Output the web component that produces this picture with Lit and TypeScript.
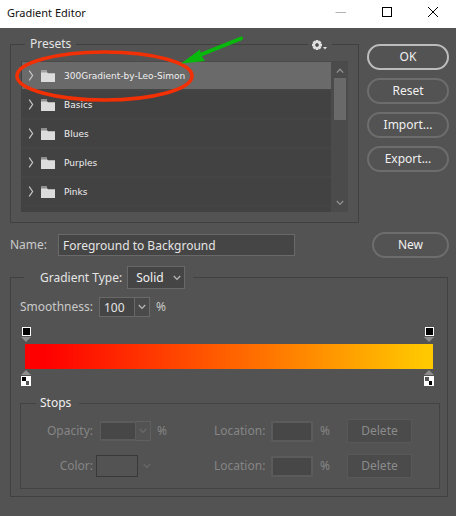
import { LitElement, html, css, svg } from "lit";
import { customElement, state } from "lit/decorators.js";

const chevronDown = html`<svg class="chev" viewBox="0 0 8 6" aria-hidden="true"><path d="M0.8 1 L4 4.4 L7.2 1" /></svg>`;
const chevronUp = html`<svg class="chev" viewBox="0 0 8 6" aria-hidden="true"><path d="M0.8 4.6 L4 1.2 L7.2 4.6" /></svg>`;
const teeth = [0, 45, 90, 135, 180, 225, 270, 315];

@customElement("app-root")
export class AppRoot extends LitElement {
  @state() private selected = 0;

  private presets = ["300Gradient-by-Leo-Simon", "Basics", "Blues", "Purples", "Pinks"];

  static styles = css`
    :host {
      display: flex;
      flex-direction: column;
      position: relative;
      min-height: 100vh;
      background: #535353;
      color: #e4e4e4;
      font: 12px/16px "Noto Sans", "Open Sans", sans-serif;
    }
    * { box-sizing: border-box; }
    button, input, select { font: inherit; color: inherit; margin: 0; border-radius: 0; }
    button { padding: 0; background: none; border: 0; }
    svg { display: block; }
    fieldset { margin: 0; min-width: 0; border: 1px solid #414141; }
    .titlebar {
      display: flex;
      align-items: center;
      height: 28px;
      padding-left: 7px;
      background: #fff;
      color: #111;
    }
    .titlebar h1 { flex: 1; margin: 0; font-size: 11px; font-weight: 400; line-height: 16px; padding-bottom: 2px; }
    .win { width: 46px; height: 28px; display: grid; place-items: center; padding-bottom: 4px; }
    .win svg { width: 12px; height: 12px; fill: none; stroke: #000; }
    .win .dim { stroke: #b4b4b4; }
    main { padding: 8px 7px 16px 10px; }
    .top { display: grid; grid-template-columns: 1fr 82px; column-gap: 8px; }
    .presets { position: relative; height: 187px; padding: 9px 10px 9px; }
    .presets legend { margin-left: 4px; padding: 0 5px; }
    .gear {
      position: absolute;
      top: -14px;
      right: 26px;
      padding: 0 3px;
      background: #535353;
    }
    .gear svg { width: 18px; height: 14px; fill: #e2e2e2; }
    .list { display: grid; grid-template-columns: 1fr 17px; height: 151px; background: #424242; overflow: hidden; border-top: 1px solid #4a4a4a; }
    .list ul { margin: 0; padding: 0 0 0 1px; list-style: none; overflow: hidden; }
    .list li { border-bottom: 2px solid #454545; }
    .row { display: flex; align-items: center; width: 100%; height: 27px; padding-left: 6px; font-family: "DejaVu Sans", sans-serif; font-size: 9px; text-align: left; color: #efefef; }
    .row.on { background: #6a6a6a; }
    .arrow { width: 6px; height: 11px; fill: none; stroke: #c8c8c8; stroke-width: 1.2; margin-right: 7px; }
    .folder { width: 14px; height: 12px; fill: #dcdcdc; margin-right: 9px; }
    .scroll { display: flex; flex-direction: column; align-items: center; padding: 6px 0; background: #4b4b4b; }
    .thumb { width: 12px; height: 42px; margin-top: 4px; margin-bottom: auto; background: #696969; }
    .chev { width: 8px; height: 6px; fill: none; stroke: #b8b8b8; stroke-width: 1.3; }
    .scroll .chev { stroke: #919191; }
    .actions { display: flex; flex-direction: column; gap: 8px; padding-top: 8px; }
    .pill { height: 26px; border: 2px solid #6d6d6d; border-radius: 13px; color: #f0f0f0; }
    .pill.main { border-color: #bcbcbc; }
    .name { display: grid; grid-template-columns: 48px 1fr 77px; align-items: center; margin-top: 9px; height: 26px; color: #c9c9c9; }
    .name input { width: 100%; height: 22px; margin: 0; padding: 0 4px; }
    .name .field { padding-right: 77px; display: flex; }
    input { min-width: 0; background: #454545; border: 1px solid #696969; color: #e4e4e4; }
    .group { margin-top: 8px; padding: 8px 7px 7px 9px; margin-right: 1px; }
    .group > legend { display: flex; align-items: center; gap: 5px; margin-left: 4px; padding: 0 8px 0 16px; }
    .select { position: relative; }
    .select select { appearance: none; display: block; width: 58px; height: 23px; padding: 0 0 0 8px; background: #454545; border: 1px solid #696969; color: #f0f0f0; }
    .select .chev { position: absolute; right: 4px; top: 9px; pointer-events: none; }
    .smooth { display: flex; align-items: center; height: 20px; color: #c9c9c9; }
    .smooth label { width: 79px; }
    .combo { display: grid; grid-template-columns: 36px 15px; height: 20px; width: 51px; margin-right: 6px; }
    .combo input { width: 100%; height: 20px; padding: 0 4px; }
    .combo button { display: grid; place-items: center; border: 1px solid #696969; border-left: 0; background: #4a4a4a; }
    .ramp { padding: 9px 7px 0 5px; }
    .bar { height: 25px; background: linear-gradient(90deg, #ff0000 5%, #ffc800 98%); }
    .marks { display: flex; justify-content: space-between; height: 18px; margin: 0 -2px 0 -4px; }
    .marks svg { width: 11px; height: 18px; }
    .stops { height: 94px; margin-top: 8px; padding: 8px 27px 0 7px; border-color: #434343; }
    .stops legend { margin-left: 8px; padding: 0 8px 0 4px; color: #f0f0f0; }
    .stoprow { display: grid; grid-template-columns: 65px 7px 51px 6px 57px 50px 7px 42px 7px 1fr 65px; align-items: center; height: 23px; color: #858585; }
    .stoprow + .stoprow { margin-top: 12px; }
    .stoprow label { white-space: nowrap; }
    .stoprow .end { text-align: right; }
    .stoprow .combo { margin: 0; }
    .stoprow input { width: 100%; height: 21px; border: 2px solid #5b5b5b; background: #474747; }
    .stoprow .combo input { height: 20px; border-width: 2px 1px; }
    .stoprow .combo button { background: none; border-color: #606060; }
    .stoprow .chev { stroke: #6a6a6a; }
    .well { display: flex; align-items: center; gap: 5px; margin-left: -4px; }
    .swatch { width: 44px; height: 22px; border: 1px solid #383838; }
    .del { height: 24px; background: #4b4b4b; border: 1px solid #585858; color: #8b8b8b; }
    .note { position: absolute; left: 0; top: 28px; width: 260px; height: 90px; pointer-events: none; }
  `;

  private row(name: string, i: number) {
    return html`<li>
      <button class="row ${i === this.selected ? "on" : ""}" @click=${() => (this.selected = i)}>
        <svg class="arrow" viewBox="0 0 6 11" aria-hidden="true"><path d="M1.2 0.6 L4.6 5.5 L1.2 10.4" /></svg>
        <svg class="folder" viewBox="0 0 14 12" aria-hidden="true"><path d="M0 0.5H6V1.5H0ZM0 2.3H6L7 3.3H14V12H0Z" /></svg>
        ${name}
      </button>
    </li>`;
  }

  private opacityMark() {
    return html`<svg viewBox="0 0 11 18" aria-hidden="true">
      <rect x="1.5" y="1.5" width="8" height="8" fill="#000" stroke="#fff" />
      <path d="M0 11H10L5 16Z" fill="#8c8c8c" />
    </svg>`;
  }

  private colorMark(flip: boolean) {
    return html`<svg viewBox="0 0 11 18" aria-hidden="true">
      <path d="M0 6H10L5 1Z" fill="#8c8c8c" />
      <rect x="0" y="7" width="10" height="10" fill="#fff" />
      <rect x="1" y="8" width="4" height="4" fill=${flip ? "#555" : "#000"} />
      <rect x="5" y="12" width="3" height="4" fill=${flip ? "#000" : "#555"} />
    </svg>`;
  }

  render() {
    return html`
      <header class="titlebar">
        <h1>Gradient Editor</h1>
        <button class="win" aria-label="Minimize"><svg class="dim" viewBox="0 0 12 12"><path class="dim" d="M0.5 6.5H11" /></svg></button>
        <button class="win" aria-label="Maximize"><svg viewBox="0 0 12 12"><rect x="1.5" y="1.5" width="9" height="9" /></svg></button>
        <button class="win" aria-label="Close"><svg viewBox="0 0 12 12"><path d="M1 1L11 11M11 1L1 11" /></svg></button>
      </header>
      <main>
        <div class="top">
          <fieldset class="presets">
            <legend>Presets</legend>
            <button class="gear" aria-label="Preset options">
              <svg viewBox="0 0 18 14">
                ${teeth.map((a) => svg`<rect x="4.7" y="2" width="2.6" height="3" transform="rotate(${a} 6 7)" />`)}
                <circle cx="6" cy="7" r="2.9" fill="none" stroke="#e2e2e2" stroke-width="2" />
                <path d="M12 9H16L14 11.4Z" />
              </svg>
            </button>
            <div class="list">
              <ul>${this.presets.map((p, i) => this.row(p, i))}</ul>
              <div class="scroll">${chevronUp}<div class="thumb"></div>${chevronDown}</div>
            </div>
          </fieldset>
          <div class="actions">
            <button class="pill main">OK</button>
            <button class="pill">Reset</button>
            <button class="pill">Import...</button>
            <button class="pill">Export...</button>
          </div>
        </div>
        <div class="name">
          <label for="name">Name:</label>
          <div class="field"><input id="name" value="Foreground to Background" /></div>
          <button class="pill">New</button>
        </div>
        <fieldset class="group">
          <legend>
            <label for="type">Gradient Type:</label>
            <span class="select"><select id="type"><option>Solid</option></select>${chevronDown}</span>
          </legend>
          <div class="smooth">
            <label for="smooth">Smoothness:</label>
            <span class="combo"><input id="smooth" value="100" /><button aria-label="Smoothness slider">${chevronDown}</button></span>
            <span>%</span>
          </div>
          <div class="ramp">
            <div class="marks">${this.opacityMark()}${this.opacityMark()}</div>
            <div class="bar"></div>
            <div class="marks">${this.colorMark(false)}${this.colorMark(true)}</div>
          </div>
          <fieldset class="stops">
            <legend>Stops</legend>
            <div class="stoprow">
              <label class="end" for="opacity">Opacity:</label><span></span>
              <span class="combo"><input id="opacity" disabled /><button disabled aria-label="Opacity slider">${chevronDown}</button></span><span></span>
              <span>%</span>
              <label for="loc1">Location:</label><span></span>
              <input id="loc1" disabled /><span></span>
              <span>%</span>
              <button class="del" disabled>Delete</button>
            </div>
            <div class="stoprow">
              <label class="end" for="color">Color:</label><span></span>
              <span class="well"><button id="color" class="swatch" disabled></button>${chevronDown}</span><span></span>
              <span></span>
              <label for="loc2">Location:</label><span></span>
              <input id="loc2" disabled /><span></span>
              <span>%</span>
              <button class="del" disabled>Delete</button>
            </div>
          </fieldset>
        </fieldset>
      </main>
      <svg class="note" viewBox="0 28 260 90" aria-hidden="true">
        <ellipse cx="104.500" cy="76" rx="87.500" ry="24" fill="none" stroke="#f23005" stroke-width="3.600" />
        <path d="M241 38.500L200 55" stroke="#08b80c" stroke-width="4" stroke-linecap="round" />
        <path d="M181 63.500L200 49.500L201 55L205 61Z" fill="#08b80c" />
      </svg>
    `;
  }
}
